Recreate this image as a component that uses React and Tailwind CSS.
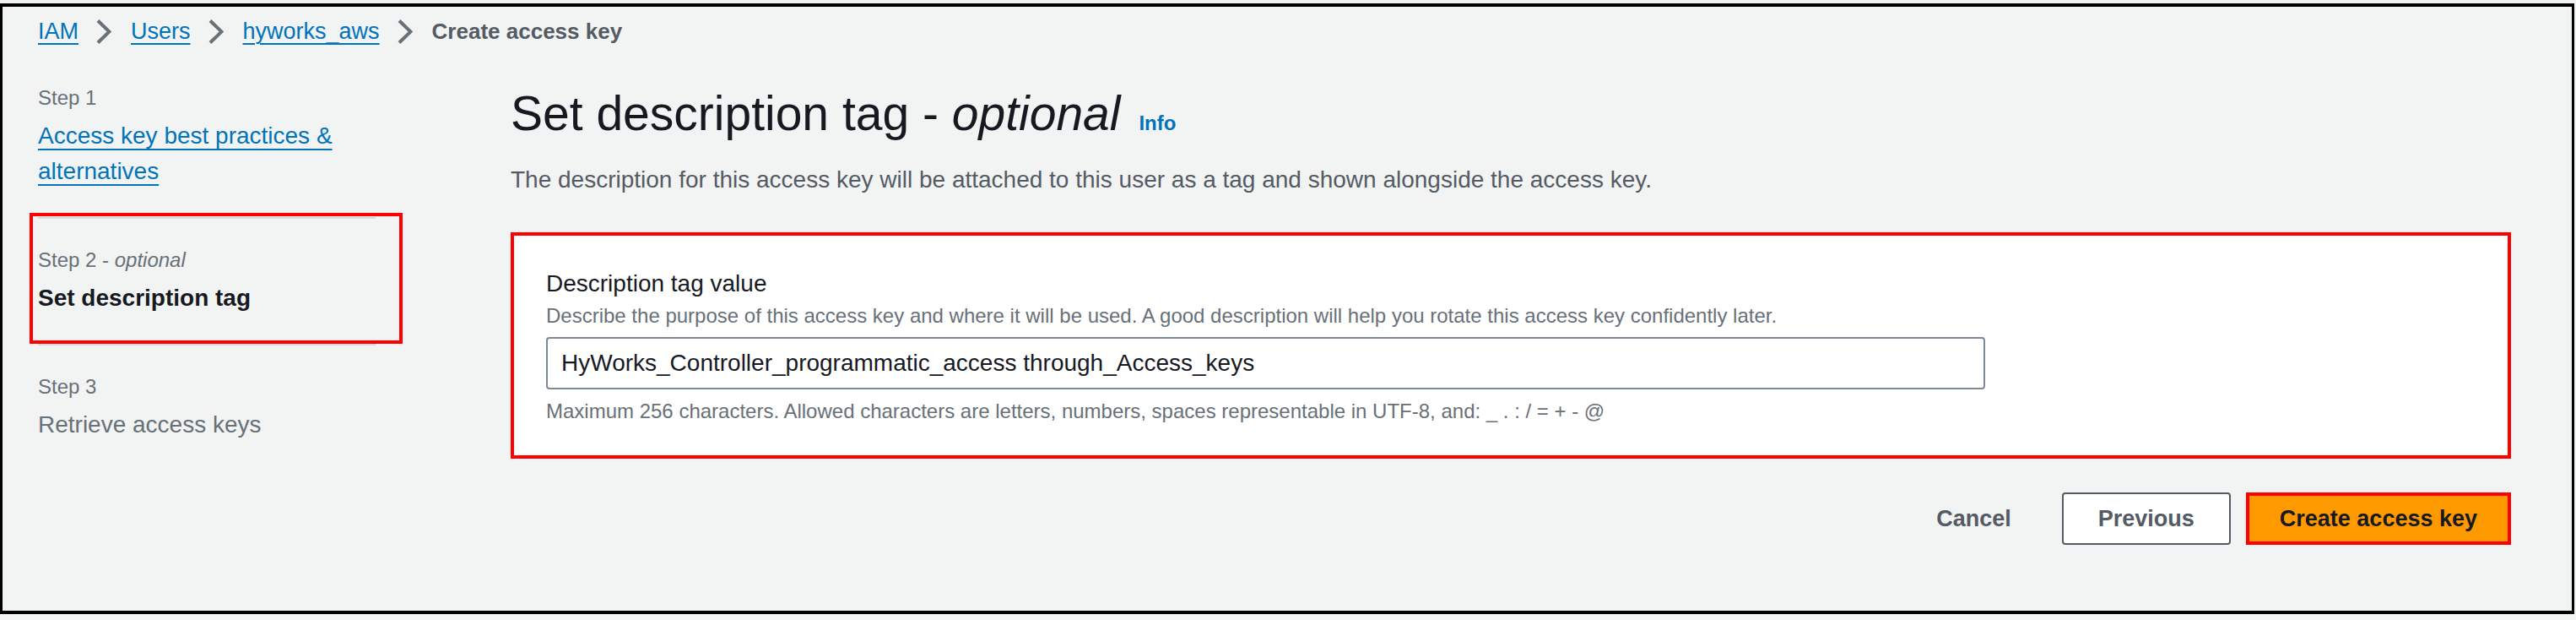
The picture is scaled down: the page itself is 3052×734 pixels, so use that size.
function Chevron() {
  return (
    <svg width="18" height="29" viewBox="0 0 18 29" className="shrink-0" aria-hidden="true">
      <path d="M2 1.5 L15.5 14.5 L2 27.5" fill="none" stroke="#687078" strokeWidth="4" />
    </svg>
  );
}

export default function App() {
  return (
    <div className="w-[3052px] h-[734px] bg-[#f2f3f3] pt-[4px] font-['Liberation_Sans',Arial,sans-serif] text-[#16191f]">
      <div className="w-[3050px] h-[723px] bg-[#f2f3f3] border-black border-t-4 border-b-4 border-l-[3px] border-r-[3px] pl-[42px] pr-[72px] pt-[9px]">
        {/* Breadcrumbs */}
        <nav className="flex items-center h-[40px] text-[27px] leading-[40px]">
          <a className="text-[#0073bb] underline decoration-2 underline-offset-[5px]">IAM</a>
          <span className="ml-[21px] mr-[23px] flex items-center"><Chevron /></span>
          <a className="text-[#0073bb] underline decoration-2 underline-offset-[5px]">Users</a>
          <span className="ml-[21px] mr-[23px] flex items-center"><Chevron /></span>
          <a className="text-[#0073bb] underline decoration-2 underline-offset-[5px]">hyworks_aws</a>
          <span className="ml-[21px] mr-[23px] flex items-center"><Chevron /></span>
          <span className="text-[26px] font-bold text-[#545b64]">Create access key</span>
        </nav>

        <div className="flex mt-[43px]">
          {/* Wizard navigation */}
          <div className="w-[400px] shrink-0">
            <div>
              <div className="text-[24px] leading-[32px] text-[#687078]">Step 1</div>
              <a className="mt-[8px] block text-[28px] leading-[42px] text-[#0073bb] underline decoration-2 underline-offset-[6px]">
                Access key best practices &amp; alternatives
              </a>
            </div>
            <div className="my-[33px] h-[2px] bg-[#d5dbdb]" />
            <div className="relative">
              <div className="absolute -left-[10px] -right-[32px] -top-[40px] -bottom-[33px] border-4 border-[#ff0000]" />
              <div className="text-[24px] leading-[32px] text-[#687078]">
                Step 2 - <i>optional</i>
              </div>
              <div className="mt-[8px] text-[28px] leading-[42px] font-bold text-[#16191f]">Set description tag</div>
            </div>
            <div className="my-[33px] h-[2px] bg-[#d5dbdb]" />
            <div>
              <div className="text-[24px] leading-[32px] text-[#687078]">Step 3</div>
              <div className="mt-[8px] text-[28px] leading-[42px] text-[#687078]">Retrieve access keys</div>
            </div>
          </div>

          {/* Main content */}
          <div className="ml-[160px] flex-1 min-w-0">
            <h1 className="text-[57px] leading-[68px] font-normal text-[#16191f]">
              Set description tag - <i>optional</i>
              <a className="ml-[22px] text-[24px] font-bold text-[#0073bb]">Info</a>
            </h1>
            <p className="mt-[13px] text-[28px] leading-[40px] text-[#545b64]">
              The description for this access key will be attached to this user as a tag and shown alongside the access key.
            </p>

            <div className="mt-[42px] bg-white border-4 border-[#ff0000] pt-[37px] pl-[38px] pb-[36px]">
              <div className="text-[28px] leading-[40px] text-[#16191f]">Description tag value</div>
              <div className="mt-[2px] text-[24px] leading-[32px] text-[#687078]">
                Describe the purpose of this access key and where it will be used. A good description will help you rotate this access key confidently later.
              </div>
              <input
                readOnly
                value="HyWorks_Controller_programmatic_access through_Access_keys"
                className="mt-[9px] block w-[1705px] h-[62px] border-2 border-[#7d8998] rounded-[4px] bg-white px-[16px] text-[28px] text-[#16191f] font-['Liberation_Sans',Arial,sans-serif] outline-none"
              />
              <div className="mt-[10px] text-[24px] leading-[32px] text-[#687078]">
                Maximum 256 characters. Allowed characters are letters, numbers, spaces representable in UTF-8, and: _ . : / = + - @
              </div>
            </div>

            <div className="mt-[40px] flex justify-end items-center gap-[18px]">
              <button className="h-[62px] px-[42px] text-[27px] font-bold text-[#545b64]">Cancel</button>
              <button className="h-[62px] px-[41px] border-2 border-[#545b64] rounded-[4px] bg-white text-[27px] font-bold text-[#545b64]">
                Previous
              </button>
              <button className="h-[62px] px-[36px] border-4 border-[#ff0000] bg-[#ff9900] text-[27px] font-bold text-[#16191f]">
                Create access key
              </button>
            </div>
          </div>
        </div>
      </div>
    </div>
  );
}
